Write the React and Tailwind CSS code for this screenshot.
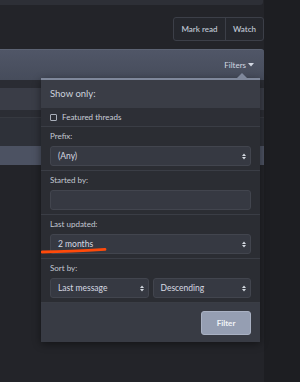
import React from "react";

const Arrows = () => (
    <svg width="4" height="7" viewBox="0 0 4 7" className="shrink-0">
        <path d="M0 3 L2 0.5 L4 3 Z" fill="#d4d8e0" />
        <path d="M0 4 L2 6.5 L4 4 Z" fill="#d4d8e0" />
    </svg>
);

const Select = ({ value, className = "" }) => (
    <div
        className={`h-[20px] flex items-center justify-between pl-[7px] pr-[4px] bg-[#363942] border border-[#42454e] rounded-[3px] text-[8.5px] text-[#d6dae2] ${className}`}
    >
        <span>{value}</span>
        <Arrows />
    </div>
);

const Section = ({ label, children }) => (
    <div className="px-[9px] pt-[3px] pb-[4px] border-b border-[#3a3d45]">
        <div className="h-[12px] flex items-center text-[8px] text-[#c3c8d2]">{label}</div>
        <div className="mt-[4px]">{children}</div>
    </div>
);

const FilterMenu = () => (
    <div className="absolute top-[29px] right-[4px] w-[219px] bg-[#2b2d33] border-t-2 border-[#7f889b] shadow-[0_2px_8px_rgba(0,0,0,0.45)]">
        {/* little arrow */}
        <svg width="12" height="6" viewBox="0 0 12 6" className="absolute -top-[7px] right-[12px]">
            <path d="M0 6 L6 0 L12 6 Z" fill="#7f889b" />
        </svg>
        <div className="h-[28px] flex items-center px-[9px] bg-[#3a3d46] text-[9.5px] text-[#cdd2dc]">
            Show only:
        </div>
        <div className="h-[19px] flex items-center gap-[5px] px-[9px] bg-[#2d2f36] border-b border-[#3a3d45] text-[8px] text-[#c9ced8]">
            <span className="w-[7px] h-[7px] border border-[#a9afba] rounded-[1px]" />
            <span>Featured threads</span>
        </div>
        <Section label="Prefix:">
            <Select value="(Any)" />
        </Section>
        <Section label="Started by:">
            <div className="h-[20px] bg-[#363942] border border-[#42454e] rounded-[3px]" />
        </Section>
        <div className="relative">
            <Section label="Last updated:">
                <Select value="2 months" />
            </Section>
            {/* hand-drawn annotation */}
            <svg width="70" height="8" viewBox="0 0 70 8" className="absolute left-0 top-[32px]">
                <path d="M1 5 C 20 4.6, 45 3.5, 64 2.4" stroke="#ff4a0a" strokeWidth="2.8" strokeLinecap="round" fill="none" />
            </svg>
        </div>
        <Section label="Sort by:">
            <div className="flex gap-[4px]">
                <Select value="Last message" className="flex-1" />
                <Select value="Descending" className="flex-1" />
            </div>
        </Section>
        <div className="h-[39px] flex items-center justify-end px-[9px] bg-[#383b44]">
            <button className="w-[50px] h-[24px] bg-[#959eb2] border border-[#a9b1c3] rounded-[3px] text-[8px] font-bold text-[#f2f4f8]">
                Filter
            </button>
        </div>
    </div>
);

export default function App() {
    return (
        <div className="w-[300px] h-[382px] bg-[#1d1e22] overflow-hidden font-['Lato',sans-serif]">
            <div className="w-[264px] h-full bg-[#232429]">
                <div className="w-[263px] h-[5px] bg-[#2d2f36] rounded-br-[3px]" />

                <div className="flex justify-end mt-[12px]">
                    <div className="flex h-[24px] border border-[#3c3f48] rounded-[3px] bg-[#25272d] text-[8px] font-semibold text-[#bcc3cf]">
                        <span className="w-[52px] flex items-center justify-center border-r border-[#3c3f48]">Mark read</span>
                        <span className="w-[37px] flex items-center justify-center">Watch</span>
                    </div>
                </div>

                <div className="relative mt-[8px]">
                    <div className="h-[31px] flex items-center justify-end pr-[10px] bg-gradient-to-b from-[#505667] to-[#464c5b] border-t border-[#5c6373] rounded-tr-[3px] text-[8px] text-[#d2d7e2]">
                        <span>Filters</span>
                        <svg width="6" height="4" viewBox="0 0 6 4" className="ml-[2px]">
                            <path d="M0 0 L6 0 L3 3.5 Z" fill="#d2d7e2" />
                        </svg>
                    </div>
                    <div className="h-[8px] bg-[#2a2c33]" />
                    <div className="h-[22px] bg-[#3a3d47]" />
                    <div className="h-[8px] bg-[#2b2d34] border-b border-[#363940]" />
                    <div className="h-[28px] bg-[#2e3139]" />
                    <div className="h-[19px] bg-[#4c5262]" />
                    <FilterMenu />
                </div>
            </div>
        </div>
    );
}
